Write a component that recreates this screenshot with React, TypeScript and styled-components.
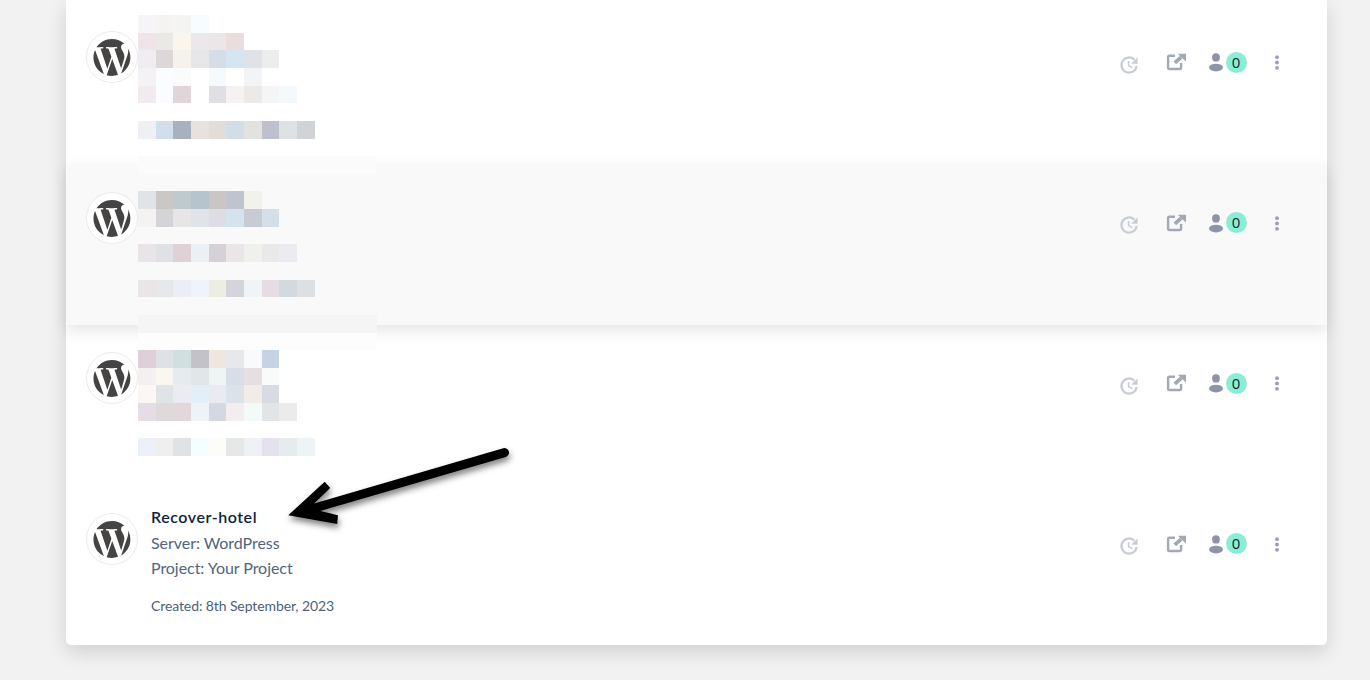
import React from 'react';
import styled, { createGlobalStyle } from 'styled-components';

const GlobalStyle = createGlobalStyle`
  * {
    box-sizing: border-box;
  }

  body {
    margin: 0;
    background: #f2f2f2;
    font-family: Lato, 'Open Sans', sans-serif;
    overflow: hidden;
  }
`;

const Page = styled.main`
  position: relative;
  width: 1370px;
  height: 680px;
  padding: 0 43px 35px 66px;
  overflow: hidden;
`;

const List = styled.section`
  display: flex;
  flex-direction: column;
  justify-content: flex-end;
  height: 645px;
  background: #fff;
  border-radius: 0 0 5px 5px;
  box-shadow: 0 7px 20px rgba(0, 0, 0, 0.14);
`;

const Row = styled.article<{ $active?: boolean; $last?: boolean }>`
  display: flex;
  align-items: flex-start;
  flex: none;
  height: ${({ $last }) => ($last ? '160px' : '160.5px')};
  padding: 0 46px 0 20px;
  background: ${({ $active }) => ($active ? '#f9f9f9' : 'transparent')};
  box-shadow: ${({ $active }) => ($active ? '0 6px 15px rgba(0, 0, 0, 0.1)' : 'none')};
`;

const Avatar = styled.div`
  display: flex;
  align-items: center;
  justify-content: center;
  flex: none;
  width: 52px;
  height: 52px;
  margin-top: 27.9px;
  border: 1px solid #ebebeb;
  border-radius: 50%;
  background: #fff;
`;

const Details = styled.div`
  margin: 19px 0 0 13px;
  white-space: nowrap;
`;

const Title = styled.h3`
  margin: 0;
  color: #0c1f3c;
  font-size: 16px;
  font-weight: 600;
  line-height: 26px;
  letter-spacing: 0.55px;
`;

const Info = styled.p`
  margin: 0;
  color: #52647c;
  font-size: 16px;
  line-height: 25px;
  letter-spacing: -0.05px;
`;

const Created = styled.p`
  margin: 15px 0 0;
  color: #4d5f78;
  font-size: 14px;
  line-height: 22px;
  letter-spacing: -0.1px;
`;

const Actions = styled.div`
  display: flex;
  align-items: center;
  height: 24px;
  margin: 46.9px 0 0 auto;

  svg {
    display: block;
    flex: none;
  }
`;

const UpdateIcon = styled.svg`
  margin: 5px 27px 0 0;
`;

const OpenIcon = styled.svg`
  margin-right: 22px;
`;

const Badge = styled.span`
  width: 21px;
  height: 21px;
  margin: 0 26.5px 0 2px;
  border-radius: 50%;
  background: #8aeed3;
  color: #10243a;
  font-family: 'Open Sans', sans-serif;
  font-size: 15px;
  line-height: 21px;
  text-align: center;
`;

const Mosaic = styled.div`
  position: absolute;
  left: 138.1px;
  top: 15.03px;
  display: grid;
  grid-template-rows: repeat(25, 17.645px);
`;

const MosaicRow = styled.div`
  display: flex;
`;

const Tile = styled.i<{ $color: string; $wide?: boolean }>`
  flex: none;
  width: ${({ $wide }) => ($wide ? '238.8px' : '17.65px')};
  background: ${({ $color }) => $color};
`;

const Pointer = styled.svg`
  position: absolute;
  left: 270px;
  top: 430px;
  filter: drop-shadow(1px 4px 3px rgba(0, 0, 0, 0.5));
`;

// One entry for each line of tiles, a single colour fills the whole line
const tiles: string[][] = [
  ['#f6f4f6', '#f4f3f2', '#f4f4f3', '#f7fdfe'],
  ['#eee4ea', '#eae9e5', '#faf5ed', '#ece7eb', '#ece6e9', '#e9dedd'],
  ['#efedf1', '#ded7d9', '#f5f2ec', '#e7e7ea', '#d6dde7', '#d3e6f2', '#dfe3e8', '#ebeeed'],
  ['#f4f2f4', '#fbfcff', '#fafbfb', '#ffffff', '#f5fafe', '#ffffff', '#f3f4f6'],
  ['#f1ebf0', '#fbfcff', '#e0d5d9', '#ffffff', '#e0dfe6', '#f6f2f4', '#ebeae6', '#f4f6f5', '#f4f9fc'],
  [],
  ['#efeff4', '#d1dfec', '#a9b0be', '#e8e2df', '#e3ddd7', '#d3dde6', '#e2e3e0', '#bfc0cd', '#dee2e5', '#d0d4d7'],
  [],
  ['#fbfbfb'],
  [],
  ['#e0e4e7', '#cbc7c4', '#bfcacf', '#b6c4cd', '#cac6c4', '#bfc4ce', '#f1f2ec'],
  ['#f4f3f1', '#d3d3d8', '#e7e5e5', '#e0e3e8', '#dddde3', '#d3e4ee', '#c8cbd4', '#d5dfe8'],
  [],
  ['#e9e4e8', '#e0e1e7', '#dfd2d7', '#ebf0f4', '#d6d1d6', '#eae6e8', '#f0f1ec', '#e9e9e9', '#ebecf1'],
  [],
  ['#eae6e8', '#e7e8ea', '#ebeff5', '#eff4fa', '#eeede2', '#d4d5dc', '#eff4f7', '#e7dce3', '#d2dae0', '#dce0e3'],
  [],
  ['#f5f5f5'],
  ['#fdfdfd'],
  ['#dfcfd9', '#dee1e6', '#d1dfe1', '#c3c2c8', '#efe6dd', '#e7e8ec', '#f8fafc', '#c4d4e3'],
  ['#f5f0f0', '#faf7f1', '#e5ebef', '#e1e6e9', '#edf6f5', '#d7dee8', '#e5dee2', '#f9fbfa'],
  ['#fbf7f4', '#dfe4e4', '#ebecf1', '#e3eef7', '#eaebf0', '#dbe2ea', '#f2ece8', '#d7dbe4'],
  ['#e6dce5', '#dedad9', '#e2d7da', '#edf3f7', '#d2d9e3', '#f3edef', '#f4faf8', '#e1e5e8', '#ebebeb'],
  [],
  ['#ecf0f9', '#efefee', '#dfe3e6', '#f6fdff', '#fdfdf8', '#e5e8e6', '#eef2f6', '#e4e2ed', '#e6ebee', '#edf4f7'],
];

const WordPressLogo: React.FC = () => (
  <svg width="38" height="38" viewBox="38 32 438 438" fill="#464442">
    <path d="M61.7 169.4l101.5 278C92.2 413 43.3 340.2 43.3 256c0-30.9 6.6-60.1 18.4-86.6zm337.9 75.9c0-26.3-9.4-44.5-17.5-58.7-10.8-17.5-20.9-32.4-20.9-49.9 0-19.6 14.8-37.8 35.7-37.8.9 0 1.8.1 2.8.2-37.9-34.7-88.3-55.9-143.7-55.9-74.3 0-139.7 38.1-177.8 95.9 5 .2 9.7.3 13.7.3 22.2 0 56.7-2.7 56.7-2.7 11.5-.7 12.8 16.2 1.4 17.5 0 0-11.5 1.3-24.3 2l77.5 230.4L249.8 247l-33.1-90.8c-11.5-.7-22.3-2-22.3-2-11.5-.7-10.1-18.2 1.3-17.5 0 0 35.1 2.7 56 2.7 22.2 0 56.7-2.7 56.7-2.7 11.5-.7 12.8 16.2 1.4 17.5 0 0-11.5 1.3-24.3 2l76.9 228.7 21.2-70.9c9-29.4 16-50.5 16-68.7zm-139.9 29.3l-63.8 185.5c19.1 5.6 39.2 8.7 60.1 8.7 24.8 0 48.5-4.3 70.6-12.1-.6-.9-1.1-1.9-1.5-2.9l-65.4-179.2zm183-120.7c.9 6.8 1.4 14 1.4 21.9 0 21.6-4 45.8-16.2 76.2l-65 187.9C426.2 403 468.7 334.5 468.7 256c0-37-9.4-71.8-26-102.1z" />
  </svg>
);

interface SiteProps {
  active?: boolean;
  last?: boolean;
  children?: React.ReactNode;
}

const Site: React.FC<SiteProps> = ({ active, last, children }) => (
  <Row $active={active} $last={last}>
    <Avatar>
      <WordPressLogo />
    </Avatar>
    {children}
    <Actions>
      <UpdateIcon width="20" height="20" viewBox="0 0 20 20" fill="none" stroke="#c8ccd4" strokeWidth="2.2">
        <path d="M15.3 4.6A7.6 7.6 0 1 0 17.6 10.8" />
        <path d="M9.6 6v4.6l3.6 2" strokeWidth="1.6" />
        <path d="M18.6 2.2v6.5h-6.5z" fill="#c8ccd4" stroke="none" />
      </UpdateIcon>
      <OpenIcon width="20" height="18" viewBox="0 0 20 18" fill="none" stroke="#a1a8b6" strokeWidth="2.4">
        <path d="M9 2.7H3.4Q2.1 2.7 2.1 4v10.6Q2.1 16 3.4 16h10.4q1.3 0 1.3-1.4V10" />
        <path d="M8.8 9.9l6.4-5.8" strokeWidth="3.8" />
        <path d="M11.8.8H20v8z" fill="#a1a8b6" stroke="none" />
      </OpenIcon>
      <svg width="16" height="20" viewBox="0 0 16 20" fill="#8d94a8">
        <ellipse cx="8" cy="5.4" rx="3.9" ry="4.2" />
        <ellipse cx="8" cy="15.6" rx="7" ry="3.9" />
      </svg>
      <Badge>0</Badge>
      <svg width="8" height="18" viewBox="0 0 8 18" fill="#97a0b4">
        <circle cx="4" cy="4.2" r="1.9" />
        <circle cx="4" cy="9.5" r="1.9" />
        <circle cx="4" cy="14.8" r="1.9" />
      </svg>
    </Actions>
  </Row>
);

const App: React.FC = () => (
  <>
    <GlobalStyle />
    <Page>
      <List>
        <Site />
        <Site active />
        <Site />
        <Site last>
          <Details>
            <Title>Recover-hotel</Title>
            <Info>Server: WordPress</Info>
            <Info>Project: Your Project</Info>
            <Created>Created: 8th September, 2023</Created>
          </Details>
        </Site>
      </List>
      <Mosaic>
        {tiles.map((line, y) => (
          <MosaicRow key={y}>
            {line.map((color, x) => (
              <Tile key={x} $color={color} $wide={line.length === 1} />
            ))}
          </MosaicRow>
        ))}
      </Mosaic>
      <Pointer width="260" height="110" viewBox="0 0 260 110">
        <path d="M36 80.5L234.5 22.6" stroke="#000" strokeWidth="9" strokeLinecap="round" />
        <path d="M18.3 85.2L54.7 51.7l5.6 6.4L44 73.5l2.5 6.5 21.5 5.3-.8 8.8z" />
      </Pointer>
    </Page>
  </>
);

export default App;
